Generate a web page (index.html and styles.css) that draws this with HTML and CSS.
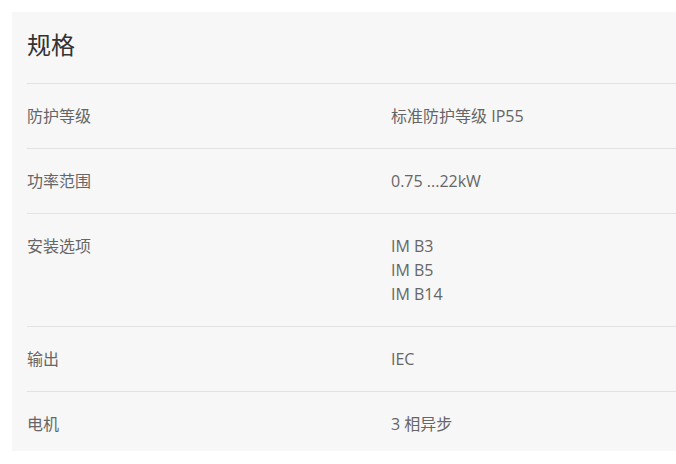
FILE: index.html
```html
<!DOCTYPE html>
<html lang="zh-CN">
<head>
    <meta charset="UTF-8">
    <meta name="viewport" content="width=device-width, initial-scale=1.0">
    <title>规格</title>
    <link rel="stylesheet" href="styles.css">
</head>
<body>
    <section class="specs">
        <h2 class="specs-title">规格</h2>

        <div class="spec-row">
            <div class="spec-label">防护等级</div>
            <div class="spec-value">标准防护等级 IP55</div>
        </div>

        <div class="spec-row">
            <div class="spec-label">功率范围</div>
            <div class="spec-value">0.75 ...22kW</div>
        </div>

        <div class="spec-row">
            <div class="spec-label">安装选项</div>
            <div class="spec-value">
                IM B3<br>
                IM B5<br>
                IM B14
            </div>
        </div>

        <div class="spec-row">
            <div class="spec-label">输出</div>
            <div class="spec-value">IEC</div>
        </div>

        <div class="spec-row">
            <div class="spec-label">电机</div>
            <div class="spec-value">3 相异步</div>
        </div>
    </section>
</body>
</html>
```

FILE: styles.css
```css
* {
    margin: 0;
    padding: 0;
    box-sizing: border-box;
}

body {
    font-family: "Open Sans", "Noto Sans CJK SC", sans-serif;
    background: #fff;
    color: #666;
    overflow: hidden;
}

.specs {
    margin: 12px 0 0 12px;
    padding: 15px 0 15px 15px;
    background: #f7f7f7;
}

.specs-title {
    font-size: 24px;
    font-weight: normal;
    line-height: 36px;
    color: #333;
    margin-bottom: 20px;
}

.spec-row {
    display: grid;
    grid-template-columns: 364px 1fr;
    padding: 20px 0;
    border-top: 1px solid #e2e2e2;
    font-size: 16px;
    line-height: 24px;
}

.spec-row:last-child {
    padding-bottom: 0;
}
```
